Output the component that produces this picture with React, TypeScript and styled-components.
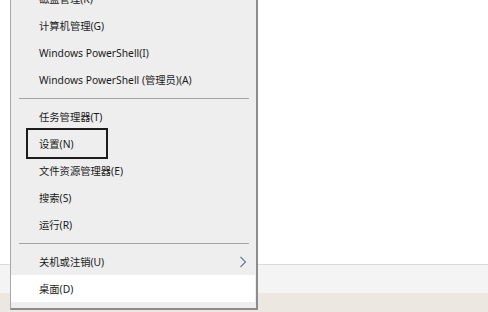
import React from "react";
import styled, { createGlobalStyle } from "styled-components";

const Global = createGlobalStyle`
  html, body { margin: 0; padding: 0; background: #ffffff; }
  #root { width: 488px; height: 312px; overflow: hidden; }
`;

const Page = styled.div`
  position: relative;
  width: 488px;
  height: 312px;
  overflow: hidden;
  display: flex;
  flex-direction: column;
  background: #ffffff;
`;

const Canvas = styled.div`
  flex: 1;
  background: #ffffff;
`;

const Strip = styled.div`
  height: 28px;
  border-top: 1px solid #dadada;
  background: #f4f4f4;
`;

const Taskbar = styled.div`
  height: 19px;
  background: #ece8e1;
`;

const Menu = styled.div`
  position: absolute;
  left: 10px;
  top: -20px;
  width: 248px;
  box-sizing: border-box;
  background: #eeeeee;
  border-left: 1px solid #a8a8a8;
  border-right: 2px solid #8c8c8c;
  border-bottom: 2px solid #8c8c8c;
  padding: 5px 0 6px 0;
  display: flex;
  flex-direction: column;
  font-family: "Noto Sans", "Noto Sans CJK SC", sans-serif;
  font-size: 10.3px;
  color: #1a1a1a;
`;

const Item = styled.div<{ $active?: boolean }>`
  height: 27px;
  display: flex;
  align-items: center;
  justify-content: space-between;
  padding: 0 8px 0 28px;
  margin-right: 1px;
  background: ${(p) => (p.$active ? "#ffffff" : "transparent")};
  white-space: nowrap;
`;

const Label = styled.span<{ $focused?: boolean }>`
  display: flex;
  align-items: center;
  ${(p) =>
    p.$focused
      ? `
    box-sizing: border-box;
    width: 82px;
    height: 31px;
    margin-left: -13px;
    padding-left: 11px;
    border: 2px solid #1c1c1c;
  `
      : ""}
`;

const Separator = styled.div`
  height: 10px;
  display: flex;
  align-items: center;
  padding: 0 7px 0 8px;
  &::before {
    content: "";
    flex: 1;
    height: 1px;
    background: #a3a3a3;
  }
`;

const Chevron = () => (
  <svg width="8" height="12" viewBox="0 0 8 12">
    <polyline
      points="1.5,1 6.5,6 1.5,11"
      fill="none"
      stroke="#6c7691"
      strokeWidth="1.1"
    />
  </svg>
);

type Entry =
  | { kind: "item"; text: string; focused?: boolean; active?: boolean; sub?: boolean }
  | { kind: "sep" };

const entries: Entry[] = [
  { kind: "item", text: "磁盘管理(K)" },
  { kind: "item", text: "计算机管理(G)" },
  { kind: "item", text: "Windows PowerShell(I)" },
  { kind: "item", text: "Windows PowerShell (管理员)(A)" },
  { kind: "sep" },
  { kind: "item", text: "任务管理器(T)" },
  { kind: "item", text: "设置(N)", focused: true },
  { kind: "item", text: "文件资源管理器(E)" },
  { kind: "item", text: "搜索(S)" },
  { kind: "item", text: "运行(R)" },
  { kind: "sep" },
  { kind: "item", text: "关机或注销(U)", sub: true },
  { kind: "item", text: "桌面(D)", active: true },
];

export default function App() {
  return (
    <>
      <Global />
      <Page>
        <Canvas />
        <Strip />
        <Taskbar />
        <Menu>
          {entries.map((e, i) =>
            e.kind === "sep" ? (
              <Separator key={i} />
            ) : (
              <Item key={i} $active={e.active}>
                <Label $focused={e.focused}>{e.text}</Label>
                {e.sub && <Chevron />}
              </Item>
            )
          )}
        </Menu>
      </Page>
    </>
  );
}
